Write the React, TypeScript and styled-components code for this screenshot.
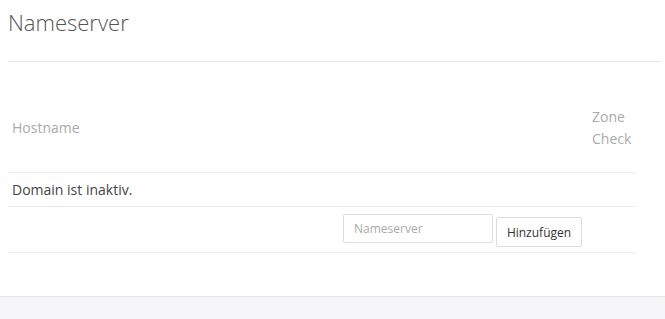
import React from 'react';
import styled, { createGlobalStyle } from 'styled-components';

const GlobalStyle = createGlobalStyle`
  html, body {
    margin: 0;
    padding: 0;
    background: #f6f6f8;
    font-family: "Open Sans", "Liberation Sans", sans-serif;
  }
`;

const Panel = styled.div`
  background: #fff;
  height: 297px;
  box-sizing: border-box;
  padding: 0 4px 0 8px;
  box-shadow: 0 1px 2px rgba(0, 0, 0, 0.08);
  border-bottom: 1px solid #e6e6e6;
`;

const Title = styled.h2`
  margin: 0;
  padding-top: 7px;
  height: 54px;
  font-size: 22px;
  font-weight: 300;
  line-height: 30px;
  color: #555;
  border-bottom: 1px solid #e8e8e8;
`;

const Table = styled.div`
  width: 628px;
  margin-top: 22px;
`;

const Row = styled.div<{ height: number }>`
  display: grid;
  grid-template-columns: 1fr 48px;
  align-items: center;
  height: ${({ height }) => height}px;
  border-bottom: 1px solid #ebebeb;
`;

const HeadCell = styled.div`
  padding: 0 4px;
  font-size: 14px;
  line-height: 22px;
  color: #aaa;
`;

const Cell = styled.div`
  padding: 0 4px;
  font-size: 14px;
  line-height: 22px;
  color: #444;
`;

const FormRow = styled.div`
  display: flex;
  justify-content: flex-end;
  align-items: flex-start;
  height: 45px;
  padding-right: 54px;
  border-bottom: 1px solid #ebebeb;
`;

const Input = styled.input`
  box-sizing: border-box;
  width: 150px;
  height: 29px;
  margin-top: 7px;
  margin-right: 3px;
  padding: 0 10px;
  font-family: inherit;
  font-size: 12px;
  color: #333;
  border: 1px solid #ddd;
  border-radius: 2px;
  outline: none;
  &::placeholder {
    color: #aaa;
  }
`;

const Button = styled.button`
  box-sizing: border-box;
  width: 86px;
  height: 30px;
  margin-top: 10px;
  padding: 0;
  font-family: inherit;
  font-size: 12px;
  color: #333;
  background: #fff;
  border: 1px solid #ddd;
  border-radius: 2px;
`;

export default function App() {
  return (
    <>
      <GlobalStyle />
      <Panel>
        <Title>Nameserver</Title>
        <Table>
          <Row height={88}>
            <HeadCell>Hostname</HeadCell>
            <HeadCell>Zone Check</HeadCell>
          </Row>
          <Row height={33}>
            <Cell>Domain ist inaktiv.</Cell>
          </Row>
          <FormRow>
            <Input placeholder="Nameserver" />
            <Button>Hinzufügen</Button>
          </FormRow>
        </Table>
      </Panel>
    </>
  );
}
